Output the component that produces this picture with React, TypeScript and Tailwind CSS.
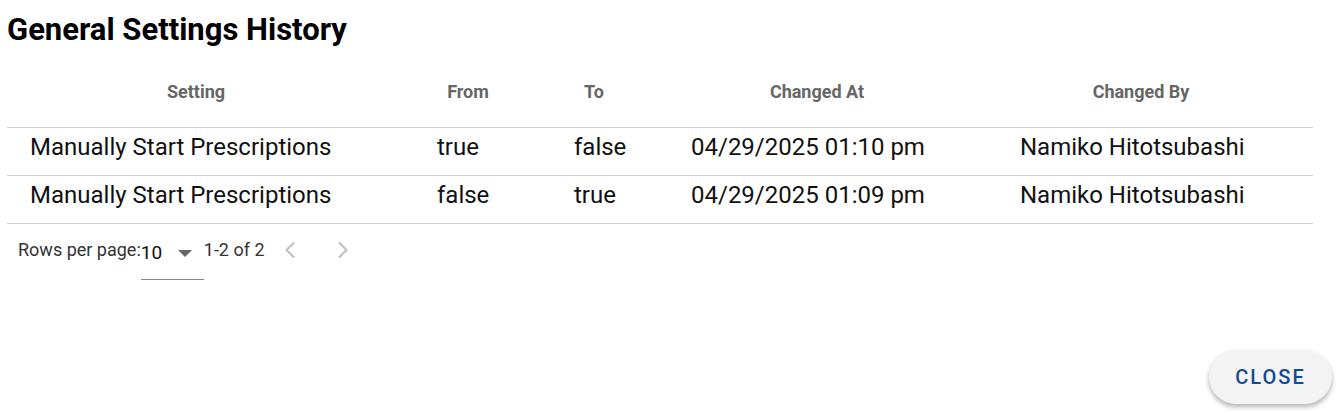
import { ChevronLeft, ChevronRight } from "lucide-react";

const rows = [
  { setting: "Manually Start Prescriptions", from: "true", to: "false", at: "04/29/2025 01:10 pm", by: "Namiko Hitotsubashi" },
  { setting: "Manually Start Prescriptions", from: "false", to: "true", at: "04/29/2025 01:09 pm", by: "Namiko Hitotsubashi" },
];

export default function App() {
  return (
    <div className="relative h-[413px] w-[1340px] bg-white font-['Roboto',sans-serif] text-black">
      <h1 className="px-[7px] pt-[12px] text-[31px] font-bold leading-[36px]">
        General Settings History
      </h1>

      <div className="ml-[7px] mt-[9px] w-[1306px]">
        {/* header */}
        <div className="flex h-[71px] items-center border-b border-[#d0d0d0] pb-[2px] text-[18px] font-bold text-[#666666]">
          <div className="w-[378px] text-center">Setting</div>
          <div className="w-[166px] text-center">From</div>
          <div className="w-[86px] text-center">To</div>
          <div className="w-[360px] text-center">Changed At</div>
          <div className="w-[288px] text-center">Changed By</div>
        </div>

        {rows.map((r, i) => (
          <div key={i} className="flex h-[48px] items-center border-b border-[#d0d0d0] pb-[10px] text-[24px] leading-[28px] text-[#111111]">
            <div className="w-[407px] pl-[23px]">{r.setting}</div>
            <div className="w-[137px] pl-[23px]">{r.from}</div>
            <div className="w-[117px] pl-[23px]">{r.to}</div>
            <div className="w-[329px] pl-[23px]">{r.at}</div>
            <div className="w-[316px] pl-[23px]">{r.by}</div>
          </div>
        ))}

        {/* pagination */}
        <div className="flex h-[56px] items-start pl-[11px] pt-[15px] text-[18px] text-[#333333]">
          <span className="leading-[22px]">Rows per page:</span>
          <div className="relative h-[41px] w-[63px] border-b border-[#8a8a8a]">
            <span className="absolute left-0 top-[3px] text-[19px] leading-[22px] text-[#111111]">10</span>
            <svg className="absolute left-[37px] top-[11px]" width="14" height="8" viewBox="0 0 14 8">
              <path d="M0 0 L7 7 L14 0 Z" fill="#666666" />
            </svg>
          </div>
          <span className="leading-[22px]">1-2 of 2</span>
          <ChevronLeft className="ml-[11px] mt-[-3px] text-[#c4c4c4]" size={28} strokeWidth={2} />
          <ChevronRight className="ml-[25px] mt-[-3px] text-[#c4c4c4]" size={28} strokeWidth={2} />
        </div>
      </div>

      <button className="absolute left-[1209px] top-[350px] flex h-[54px] w-[123px] items-center justify-center rounded-full bg-[#f3f3f3] text-[20px] font-medium tracking-[2px] text-[#124b93] shadow-[0_3px_5px_rgba(0,0,0,0.3)]">
        CLOSE
      </button>
    </div>
  );
}
